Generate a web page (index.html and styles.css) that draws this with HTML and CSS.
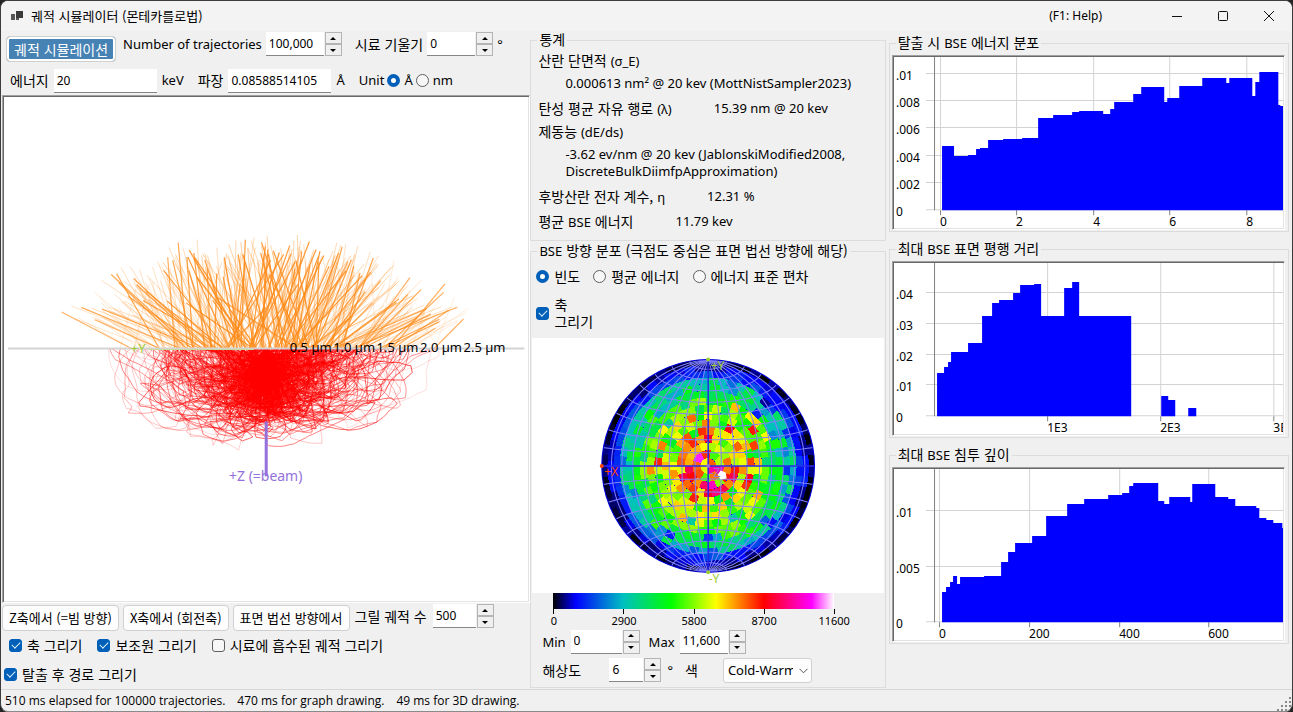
FILE: index.html
```html
<!DOCTYPE html>
<html lang="ko">
<head>
<meta charset="utf-8">
<title>궤적 시뮬레이터 (몬테카를로법)</title>
<link rel="stylesheet" href="styles.css">
</head>
<body>
<div class="window">
  <header class="titlebar">
    <svg class="app-icon" width="12" height="12" viewBox="0 0 12 12"><path d="M0 4h4v6H0zM5 8h3v2H5z" fill="#555"/><path d="M5 1h7v7H5z" fill="#3a3a3a"/></svg>
    <h1 class="title">궤적 시뮬레이터 (몬테카를로법)</h1>
    <span class="help">(F1: Help)</span>
    <div class="caption-buttons">
      <button class="caption" type="button" aria-label="Minimize"><svg width="12" height="12" viewBox="0 0 12 12"><path d="M1 6.5h10"/></svg></button>
      <button class="caption" type="button" aria-label="Maximize"><svg width="12" height="12" viewBox="0 0 12 12"><rect x="1.5" y="1.5" width="9" height="9" rx="1"/></svg></button>
      <button class="caption" type="button" aria-label="Close"><svg width="12" height="12" viewBox="0 0 12 12"><path d="M1 1l10 10M11 1L1 11"/></svg></button>
    </div>
  </header>

  <main class="panels">
    <section class="left">
      <div class="toolbar">
        <div class="row row-top">
          <button class="btn primary" type="button">궤적 시뮬레이션</button>
          <div class="field"><label class="en" for="num">Number of trajectories</label>
            <div class="spin"><input id="num" class="text w58" value="100,000"><span class="steps"><button type="button" class="step up" aria-label="Up"></button><button type="button" class="step down" aria-label="Down"></button></span></div></div>
          <div class="field"><label for="tilt">시료 기울기</label>
            <div class="spin"><input id="tilt" class="text w48" value="0"><span class="steps"><button type="button" class="step up" aria-label="Up"></button><button type="button" class="step down" aria-label="Down"></button></span></div><span class="en degree">°</span></div>
        </div>
        <div class="row row-second">
          <div class="field wide"><label for="energy">에너지</label><input id="energy" class="text w103" value="20"><span class="en">keV</span></div>
          <div class="field wide"><label for="wave">파장</label><input id="wave" class="text w103" value="0.08588514105"><span class="en">Å</span></div>
          <div class="field tight"><span class="en">Unit</span>
            <label class="opt en"><input type="radio" name="unit" checked>Å</label>
            <label class="opt en nm"><input type="radio" name="unit">nm</label></div>
        </div>
      </div>
      <div class="sunken scene"><svg id="scene" viewBox="0 0 525 503"></svg></div>
      <div class="row view-row">
        <button class="btn" type="button">Z축에서 (=빔 방향)</button>
        <button class="btn" type="button">X축에서 (회전축)</button>
        <button class="btn" type="button">표면 법선 방향에서</button>
        <div class="field"><label for="draw">그릴 궤적 수</label>
          <div class="spin"><input id="draw" class="text w43" value="500"><span class="steps"><button type="button" class="step up" aria-label="Up"></button><button type="button" class="step down" aria-label="Down"></button></span></div></div>
      </div>
      <div class="checks">
        <label class="opt"><input type="checkbox" checked>축 그리기</label>
        <label class="opt"><input type="checkbox" checked>보조원 그리기</label>
        <label class="opt"><input type="checkbox">시료에 흡수된 궤적 그리기</label>
      </div>
      <div class="checks last">
        <label class="opt"><input type="checkbox" checked>탈출 후 경로 그리기</label>
      </div>
    </section>

    <section class="middle">
      <fieldset class="group">
        <legend>통계</legend>
        <dl class="stats">
          <div class="stat stacked"><dt>산란 단면적 <span class="en">(σ_E)</span></dt><dd>0.000613 nm² @ 20 kev (MottNistSampler2023)</dd></div>
          <div class="stat"><dt>탄성 평균 자유 행로 <span class="en">(λ)</span></dt><dd>15.39 nm @ 20 kev</dd></div>
          <div class="stat stacked"><dt>제동능 <span class="en">(dE/ds)</span></dt><dd>-3.62 ev/nm @ 20 kev (JablonskiModified2008, DiscreteBulkDiimfpApproximation)</dd></div>
          <div class="stat"><dt>후방산란 전자 계수, <span class="en">η</span></dt><dd>12.31 %</dd></div>
          <div class="stat"><dt>평균 <span class="en">BSE</span> 에너지</dt><dd>11.79 kev</dd></div>
        </dl>
      </fieldset>
      <fieldset class="group grow">
        <legend><span class="en">BSE</span> 방향 분포 (극점도 중심은 표면 법선 방향에 해당)</legend>
        <div class="modes">
          <label class="opt"><input type="radio" name="mode" checked>빈도</label>
          <label class="opt"><input type="radio" name="mode">평균 에너지</label>
          <label class="opt"><input type="radio" name="mode">에너지 표준 편차</label>
        </div>
        <label class="opt two-line"><input type="checkbox" checked><span>축<br>그리기</span></label>
        <div class="net"><svg id="net" viewBox="0 0 350 254"></svg></div>
        <div class="scale">
          <div class="scale-bar"></div>
          <div class="scale-ticks"><span>0</span><span>2900</span><span>5800</span><span>8700</span><span>11600</span></div>
        </div>
        <div class="row range-row">
          <div class="field"><label class="en" for="min">Min</label>
            <div class="spin"><input id="min" class="text w51" value="0"><span class="steps"><button type="button" class="step up" aria-label="Up"></button><button type="button" class="step down" aria-label="Down"></button></span></div></div>
          <div class="field"><label class="en" for="max">Max</label>
            <div class="spin"><input id="max" class="text w48" value="11,600"><span class="steps"><button type="button" class="step up" aria-label="Up"></button><button type="button" class="step down" aria-label="Down"></button></span></div></div>
        </div>
        <div class="row res-row">
          <div class="field res"><label for="res">해상도</label>
            <div class="spin"><input id="res" class="text w34" value="6"><span class="steps"><button type="button" class="step up" aria-label="Up"></button><button type="button" class="step down" aria-label="Down"></button></span></div><span class="en degree">°</span></div>
          <div class="field color"><label for="color">색</label>
            <span class="select-box"><select id="color"><option>Cold-Warm</option></select><svg class="chevron" width="9" height="6" viewBox="0 0 9 6"><path d="M.5 .8l4 4 4-4"/></svg></span></div>
        </div>
      </fieldset>
    </section>

    <section class="right">
      <fieldset class="group chart">
        <legend>탈출 시 <span class="en">BSE</span> 에너지 분포</legend>
        <div class="sunken"><svg id="chart-energy" viewBox="0 0 389 171"></svg></div>
      </fieldset>
      <fieldset class="group chart">
        <legend>최대 <span class="en">BSE</span> 표면 평행 거리</legend>
        <div class="sunken"><svg id="chart-distance" viewBox="0 0 389 171"></svg></div>
      </fieldset>
      <fieldset class="group chart">
        <legend>최대 <span class="en">BSE</span> 침투 깊이</legend>
        <div class="sunken"><svg id="chart-depth" viewBox="0 0 389 171"></svg></div>
      </fieldset>
    </section>
  </main>

  <footer class="status">
    <span>510 ms elapsed for 100000 trajectories.</span>
    <span>470 ms for graph drawing.</span>
    <span>49 ms for 3D drawing.</span>
    <svg class="grip" width="16" height="16" viewBox="0 0 16 16"><path fill="#888" d="M13 2h2v2h-2zM9 6h2v2H9zM13 6h2v2h-2zM5 10h2v2H5zM9 10h2v2H9zM13 10h2v2h-2zM1 14h2v2H1zM5 14h2v2H5zM9 14h2v2H9zM13 14h2v2h-2z"/></svg>
  </footer>
</div>
<script src="app.js"></script>
</body>
</html>
```

FILE: styles.css
```css
* { box-sizing: border-box; }

body {
  margin: 0;
  background: #242424;
  color: #000;
  font-family: "Noto Sans CJK KR", sans-serif;
  font-size: 14px;
  line-height: 18px;
}

button, input, select { font: inherit; color: inherit; margin: 0; }

.window {
  display: flex;
  flex-direction: column;
  min-height: 100vh;
  background: #f0f0f0;
  border: 1px solid #3c3c3c;
  border-bottom-color: #8a8a8a;
  border-radius: 8px;
  overflow: hidden;
}

.en, .text, .stats dd, .help, select { font-family: "Noto Sans", "Noto Sans CJK KR", sans-serif; font-size: 13px; }

/* Title bar */
.titlebar { display: flex; align-items: center; height: 30px; background: #f3f3f3; padding-left: 10px; flex: none; }
.title { margin: 0 auto 0 8px; font-size: 13px; font-weight: 400; line-height: 16px; }
.help { margin-right: 52px; font-size: 12px; }
.caption-buttons { display: flex; }
.caption { width: 46px; height: 29px; border: 0; background: none; padding: 0; display: grid; place-items: center; }
.caption svg { fill: none; stroke: #111; stroke-width: 1; }

/* Panels */
.panels { flex: 1; display: grid; grid-template-columns: 529fr 355fr 406fr; }
.panels > section { min-width: 0; display: flex; flex-direction: column; }

.row { display: flex; align-items: center; }
.field { display: flex; align-items: center; gap: 6px; white-space: nowrap; }
.row-top { height: 31px; gap: 7px; padding: 1px 0 0 5px; align-items: flex-start; }
.row-top .primary { align-self: flex-end; }
.row-top .field { gap: 4px; }
.row-top .field + .field { margin-left: 6px; }
.row-second { height: 24px; margin: 7px 0 2px; padding-left: 9px; gap: 14px; }
.field.wide { gap: 5px; }
.field.wide label, .row-second .en { line-height: 20px; padding-bottom: 2px; }
.field.tight { gap: 3px; }
.row-second .opt { gap: 4px; }

.btn {
  height: 26px;
  padding: 0 6px;
  border: 1px solid #d0d0d0;
  border-radius: 4px;
  background: #fdfdfd;
  font-size: 13px;
  line-height: 18px;
  white-space: nowrap;
}
.btn.primary { padding: 0 7px; background: #4682b4; color: #fff; box-shadow: inset 0 0 0 2px #fff; font-size: 14px; }

.text { height: 24px; padding: 0 3px 1px; border: 0; border-bottom: 1px solid #868686; background: #fff; min-width: 0; font-size: 12px; }
.w34 { width: 34px; }
.w43 { width: 43px; }
.w48 { width: 48px; }
.w51 { width: 51px; }
.w58 { width: 58px; }
.w103 { width: 103px; }

.spin { display: flex; gap: 1px; }
.steps { display: flex; flex-direction: column; width: 17px; }
.step { flex: 1; height: 12px; padding: 0; border: 1px solid #b4b4b4; background: #f0f0f0; display: grid; place-items: center; }
.step::before { content: ""; border: 3px solid transparent; }
.step.up::before { border-bottom-color: #000; border-top: 0; }
.step.down::before { border-top-color: #000; border-bottom: 0; }

.opt { display: inline-flex; align-items: center; gap: 5px; white-space: nowrap; }
.opt input { appearance: none; width: 13px; height: 13px; flex: none; border: 1px solid #5f5f5f; background: #f7f7f7; display: grid; place-items: center; }
.opt input[type="checkbox"] { border-radius: 3px; }
.opt input[type="checkbox"]:checked { background: #005fb8; border-color: #005fb8; }
.opt input[type="checkbox"]:checked::before { content: ""; width: 7px; height: 4px; border: solid #d8ecff; border-width: 0 0 1px 1px; transform: rotate(-45deg) translate(1px, -1px); }
.opt input[type="radio"] { border-radius: 50%; }
.opt input[type="radio"]:checked { border: 4px solid #005fb8; background: #fff; }

.sunken { border: 1px solid; border-color: #a0a0a0 #fff #fff #a0a0a0; background: #fff; box-shadow: inset 1px 1px #696969, inset -1px -1px #e3e3e3; padding: 1px; }
.sunken svg { display: block; width: 100%; }
.scene { flex: 1; margin-left: 1px; display: flex; min-height: 0; }

.view-row { padding: 1px 0 0 1px; gap: 4px; align-items: flex-start; }
.view-row .btn { margin-top: 1px; }
.view-row .field { margin-left: 1px; }
.checks { display: flex; gap: 15px; padding: 0 0 0 8px; height: 28px; align-items: center; }
.checks.last { padding: 0 0 0 3px; height: 30px; }

/* Group boxes */
.group { margin: 0; padding: 0; border: 1px solid #dcdcdc; min-width: 0; }
.group legend { margin-left: 6px; padding: 0 2px; height: 18px; line-height: 16px; white-space: nowrap; }
.stats { margin: 0; padding: 1px 0 6px 7px; }
.stat { display: flex; align-items: center; gap: 42px; min-height: 25px; }
.stat.stacked { display: block; }
.stats dt { line-height: 18px; white-space: nowrap; }
.stats dd { margin: 0; line-height: 17px; }
.stat.stacked dt { padding-top: 1px; }
.stat.stacked dd { padding: 5px 20px 4px 27px; }
.grow { flex: 1; margin: 1px 0; }

.modes { display: flex; gap: 13px; padding: 7px 0 0 5px; }
.two-line { padding: 11px 0 0 5px; line-height: 17px; }
.net { margin: 8px 1px 0; background: #fff; }
.net svg { display: block; width: 100%; }

.scale { margin: 0 51px 0 22px; font: 11px/13px "Noto Sans", sans-serif; }
.scale-bar { height: 16px; background: linear-gradient(90deg, #000 0, #00f 8%, #00c0c0 25%, #0f0 42%, #ff0 58%, #f00 75%, #f0f 92%, #fff 100%); }
.scale-ticks { display: grid; grid-template-columns: repeat(4, 1fr) 0; height: 21px; }
.scale-ticks span { width: 1px; height: 5px; background: #000; padding-top: 5px; display: flex; justify-content: center; }

.range-row { gap: 9px; padding-left: 11px; }
.range-row .field { gap: 5px; }
.res-row { padding: 4px 0 3px 11px; gap: 12px; }
.field.res label { width: 61px; }
.field.color { gap: 25px; }
.field.color, .field.res { height: 25px; }
.degree { align-self: flex-start; line-height: 24px; }
.select-box { position: relative; display: flex; }
select { appearance: none; width: 89px; height: 25px; padding: 0 18px 0 4px; border: 1px solid #d0d0d0; border-radius: 3px; background: #fdfdfd; }
.chevron { position: absolute; right: 4px; top: 10px; fill: none; stroke: #555; pointer-events: none; }

.right { padding: 3px 3px 0; gap: 8px; }
.chart .sunken { margin: 3px 3px 1px 2px; }

/* Status bar */
.status { display: flex; gap: 12px; align-items: center; height: 22px; border-top: 1px solid #d7d7d7; padding-left: 4px; flex: none; font-family: "Open Sans", sans-serif; font-size: 12px; }
.grip { margin-left: auto; align-self: flex-end; }

/* Drawings */
svg text { font-family: "Noto Sans", sans-serif; font-size: 12px; }
#scene text { font-size: 13px; }
#scene .beam-label { font-size: 14px; }
.grid-line { stroke: #d3d3d3; stroke-width: 1; }
.axis-line { stroke: #808080; stroke-width: 1; }
.bars { fill: #00f; }
.electron { fill: none; stroke: #f00; }
.escape { stroke: #ff8c1a; }
.graticule { fill: none; stroke: #8080ff; stroke-width: 1; }
```

FILE: app.js
```js
const NS = "http://www.w3.org/2000/svg";

function add(parent, name, attrs, text) {
  const node = document.createElementNS(NS, name);
  for (const key in attrs) node.setAttribute(key, attrs[key]);
  if (text !== undefined) node.textContent = text;
  parent.appendChild(node);
  return node;
}

function generator(seed) {
  return function () {
    seed = (seed + 0x6d2b79f5) | 0;
    let t = Math.imul(seed ^ (seed >>> 15), 1 | seed);
    t = (t + Math.imul(t ^ (t >>> 7), 61 | t)) ^ t;
    return ((t ^ (t >>> 14)) >>> 0) / 4294967296;
  };
}

function gaussian(rand) {
  return Math.sqrt(-2 * Math.log(rand() + 1e-9)) * Math.cos(2 * Math.PI * rand());
}

/* Histograms: steps are [left edge, top] pairs, the last one closes the outline. */
function drawChart(id, chart) {
  const svg = document.getElementById(id);
  const base = 153;
  for (const [y] of chart.rows) add(svg, "line", { class: "grid-line", x1: 32, x2: 389, y1: y + 0.5, y2: y + 0.5 });
  for (const [x] of chart.columns) {
    add(svg, "line", { class: "grid-line", x1: x + 0.5, x2: x + 0.5, y1: 0, y2: base });
    add(svg, "line", { class: "axis-line", x1: x + 0.5, x2: x + 0.5, y1: base, y2: base + 5 });
  }
  add(svg, "line", { class: "axis-line", x1: 40.5, x2: 40.5, y1: 0, y2: base });
  let d = "M" + chart.steps[0][0] + " " + base;
  for (const [x, y] of chart.steps) d += "H" + x + "V" + y;
  add(svg, "path", { class: "bars", d: d + "V" + base + "Z" });
  for (const [y, label] of chart.rows) add(svg, "text", { x: 2, y: y + 7 }, label);
  for (const [x, label] of chart.columns) add(svg, "text", { x: x, y: 169 }, label);
}

drawChart("chart-energy", {
  rows: [[16, ".01"], [43, ".008"], [70, ".006"], [98, ".004"], [125, ".002"], [152, "0"]],
  columns: [[46, "0"], [122, "2"], [199, "4"], [275, "6"], [352, "8"]],
  steps: [[48, 89], [60, 99], [74, 98], [82, 92], [86, 91], [94, 83], [109, 82], [128, 81], [144, 61], [159, 58], [178, 55], [185, 54], [209, 57], [216, 52], [220, 45], [239, 37], [247, 30], [270, 45], [273, 41], [285, 29], [308, 21], [332, 26], [335, 21], [358, 39], [361, 25], [365, 15], [384, 48], [386, 49], [389, 49]]
});
drawChart("chart-distance", {
  rows: [[29, ".04"], [60, ".03"], [91, ".02"], [121, ".01"], [152, "0"]],
  columns: [[153, "1E3"], [266, "2E3"], [379, "3E3"]],
  steps: [[43, 110], [50, 104], [54, 99], [57, 89], [74, 80], [88, 53], [98, 40], [105, 37], [119, 30], [126, 22], [140, 21], [147, 53], [170, 25], [178, 19], [185, 53], [237, 153], [267, 133], [274, 137], [281, 153], [294, 145], [302, 153]]
});
drawChart("chart-depth", {
  rows: [[41, ".01"], [97, ".005"], [152, "0"]],
  columns: [[45, "0"], [135, "200"], [225, "400"], [314, "600"]],
  steps: [[48, 123], [52, 118], [56, 113], [59, 107], [63, 115], [66, 108], [90, 107], [107, 93], [114, 83], [121, 74], [138, 67], [152, 47], [173, 35], [190, 30], [214, 26], [228, 24], [235, 17], [239, 14], [264, 32], [270, 35], [275, 28], [296, 33], [298, 15], [321, 28], [334, 30], [341, 37], [362, 39], [365, 49], [372, 51], [379, 54], [388, 59], [389, 59]]
});

/* Electron trajectories seen from the side; the surface is the horizontal line. */
(function drawScene() {
  const svg = document.getElementById("scene");
  const rand = generator(20);
  const cx = 262, cy = 251;
  const red = add(svg, "g", {});
  const orange = add(svg, "g", {});
  const total = 560;
  let made = 0;
  for (let tries = 0; tries < 80000 && made < total; tries++) {
    const inner = made % 5 < 2;
    let y = 4 + rand() * 66, x = gaussian(rand) * y * 0.35, heading = Math.PI / 2 + gaussian(rand) * 1.5;
    let bend = gaussian(rand) * 0.05;
    let d = "M" + cx + " " + cy + "L" + (cx + x).toFixed(1) + " " + (cy + y).toFixed(1);
    let steps = 0;
    while (y > 0 && steps < (inner ? 50 : 95)) {
      if (rand() < 0.14) { heading += gaussian(rand) * 0.9; bend = gaussian(rand) * 0.06; }
      heading += bend + gaussian(rand) * 0.12;
      x += Math.cos(heading) * 4.2;
      y += Math.sin(heading) * 3.3 - y / 200;
      if (y < 0) y = 0;
      const depth = 104 * Math.sqrt(Math.max(0, 1 - (x / 180) ** 2));
      if (y > depth) break;
      d += "L" + (cx + x).toFixed(1) + " " + (cy + y).toFixed(1);
      steps++;
    }
    if (y > 0 || steps < 8) continue;
    made++;
    const far = Math.abs(x) / 180;
    const shade = Math.max(0.15, 0.35 + rand() * 0.5 - far * 0.35);
    add(red, "path", { class: "electron", d: d, "stroke-opacity": shade.toFixed(2), "stroke-width": 0.9 });
    if (made % 8 > 4) continue;
    const tilt = gaussian(rand) * 0.45 + x / 110;
    const angle = Math.max(-1.2, Math.min(1.2, tilt)) - Math.PI / 2;
    const reach = 50 + 75 * Math.sqrt(rand());
    let ex = x + Math.cos(angle) * reach, ey = Math.sin(angle) * reach;
    const limit = Math.hypot(ex / 215, ey / 118);
    const edge = 0.75 + rand() * 0.25;
    if (limit > edge) { ex *= edge / limit; ey *= edge / limit; }
    const strong = rand() < 0.3;
    const tone = (strong ? 0.85 : 0.35) - far * 0.3 + rand() * 0.1;
    add(orange, "line", { class: "escape", x1: (cx + x).toFixed(1), y1: cy, x2: (cx + ex).toFixed(1), y2: (cy + ey).toFixed(1), "stroke-opacity": Math.max(0.15, tone).toFixed(2), "stroke-width": strong ? 1.2 : 1 });
  }
  add(svg, "line", { x1: 4, x2: 521, y1: 251, y2: 251, stroke: "#d3d3d3", "stroke-width": 2 });
  add(svg, "line", { x1: 145, x2: 250, y1: 252, y2: 252, stroke: "#c8dc9c", "stroke-width": 1 });
  add(svg, "line", { x1: 262.5, x2: 262.5, y1: 324, y2: 379, stroke: "#9370db", "stroke-width": 3 });
  add(svg, "text", { x: 127, y: 256, fill: "#9acd32" }, "+Y");
  add(svg, "text", { class: "beam-label", x: 262, y: 384, fill: "#9370db", "text-anchor": "middle" }, "+Z (=beam)");
  ["0.5", "1.0", "1.5", "2.0", "2.5"].forEach(function (value, i) {
    add(svg, "text", { x: 307 + i * 43.5, y: 255, "text-anchor": "middle" }, value + " µm");
  });
})();

/* Pole figure: equal-area hemisphere split into six-degree cells. */
(function drawNet() {
  const svg = document.getElementById("net");
  const rand = generator(7);
  const cx = 175.5, cy = 127.5, R = 106;
  const stops = [[0, 0, 0, 0], [0.08, 0, 0, 255], [0.25, 0, 192, 192], [0.42, 0, 255, 0], [0.58, 255, 255, 0], [0.75, 255, 0, 0], [0.92, 255, 0, 255], [1, 255, 255, 255]];
  function color(v) {
    v = Math.max(0, Math.min(1, v));
    let i = 1;
    while (stops[i][0] < v) i++;
    const a = stops[i - 1], b = stops[i], t = (v - a[0]) / (b[0] - a[0]);
    return "rgb(" + [1, 2, 3].map(k => Math.round(a[k] + (b[k] - a[k]) * t)).join(",") + ")";
  }
  const ringRadius = deg => R * Math.SQRT2 * Math.sin(deg * Math.PI / 360);
  const at = (r, a) => (cx + r * Math.cos(a)).toFixed(2) + " " + (cy + r * Math.sin(a)).toFixed(2);
  add(svg, "circle", { cx: cx, cy: cy, r: R, fill: "#00f" });
  for (let ring = 14; ring >= 0; ring--) {
    const r0 = ringRadius(ring * 6), r1 = ringRadius(ring * 6 + 6);
    const mid = (r0 + r1) / 2 / R;
    const count = Math.max(4, Math.round(60 * Math.sin((ring * 6 + 3) * Math.PI / 180)));
    for (let k = 0; k < count; k++) {
      const a0 = 2 * Math.PI * k / count, a1 = 2 * Math.PI * (k + 1) / count;
      let v = 0.69 * (1 - mid * mid) + gaussian(rand) * 0.11 * Math.sqrt(1.02 - mid * mid);
      if (ring === 14) v = rand() * rand() * 0.06;
      if (ring === 13) v = 0.03 + rand() * 0.08;
      if (ring === 12) v = 0.07 + rand() * 0.1;
      const arc = "A" + r1.toFixed(2) + " " + r1.toFixed(2) + " 0 0 1 ";
      const back = r0 > 0 ? "L" + at(r0, a1) + "A" + r0.toFixed(2) + " " + r0.toFixed(2) + " 0 0 0 " + at(r0, a0) : "";
      add(svg, "path", { fill: color(Math.min(v, 0.93)), "shape-rendering": "crispEdges", d: "M" + at(r0, a0) + "L" + at(r1, a0) + arc + at(r1, a1) + back + "Z" });
    }
  }
  function curve(points) {
    const d = points.map(function ([x, y, z]) {
      const f = R / Math.sqrt(1 + z);
      return (cx + x * f).toFixed(2) + " " + (cy - y * f).toFixed(2);
    });
    add(svg, "path", { class: "graticule", d: "M" + d.join("L") });
  }
  const rad = Math.PI / 180;
  for (let lon = -80; lon <= 80; lon += 10) {
    const points = [];
    for (let lat = -90; lat <= 90; lat += 3) points.push([Math.cos(lat * rad) * Math.sin(lon * rad), Math.sin(lat * rad), Math.cos(lat * rad) * Math.cos(lon * rad)]);
    curve(points);
  }
  for (let lat = -80; lat <= 80; lat += 10) {
    const points = [];
    for (let lon = -90; lon <= 90; lon += 3) points.push([Math.cos(lat * rad) * Math.sin(lon * rad), Math.sin(lat * rad), Math.cos(lat * rad) * Math.cos(lon * rad)]);
    curve(points);
  }
  add(svg, "path", { d: "M69.5 127.5h212M175.5 21.5v212", stroke: "#0000e0", "stroke-width": 1, fill: "none" });
  add(svg, "circle", { cx: cx, cy: cy, r: R, fill: "none", stroke: "#0000e0" });
  add(svg, "path", { d: "M188 132l5 2 1 6-6 1-3-5z", fill: "#fff" });
  [[175.5, 21.5, "#9acd32"], [175.5, 233.5, "#9acd32"], [69.5, 127.5, "#ff4500"], [175.5, 127.5, "#9370db"]].forEach(function ([x, y, fill]) {
    add(svg, "circle", { cx: x, cy: y, r: 2, fill: fill });
  });
  [[178, 32, "#9acd32", "+Y"], [176, 244, "#9acd32", "-Y"], [72, 138, "#ff4500", "+X"], [177, 139, "#9370db", "-Z"]].forEach(function ([x, y, fill, label]) {
    add(svg, "text", { x: x, y: y, fill: fill }, label);
  });
})();
```
